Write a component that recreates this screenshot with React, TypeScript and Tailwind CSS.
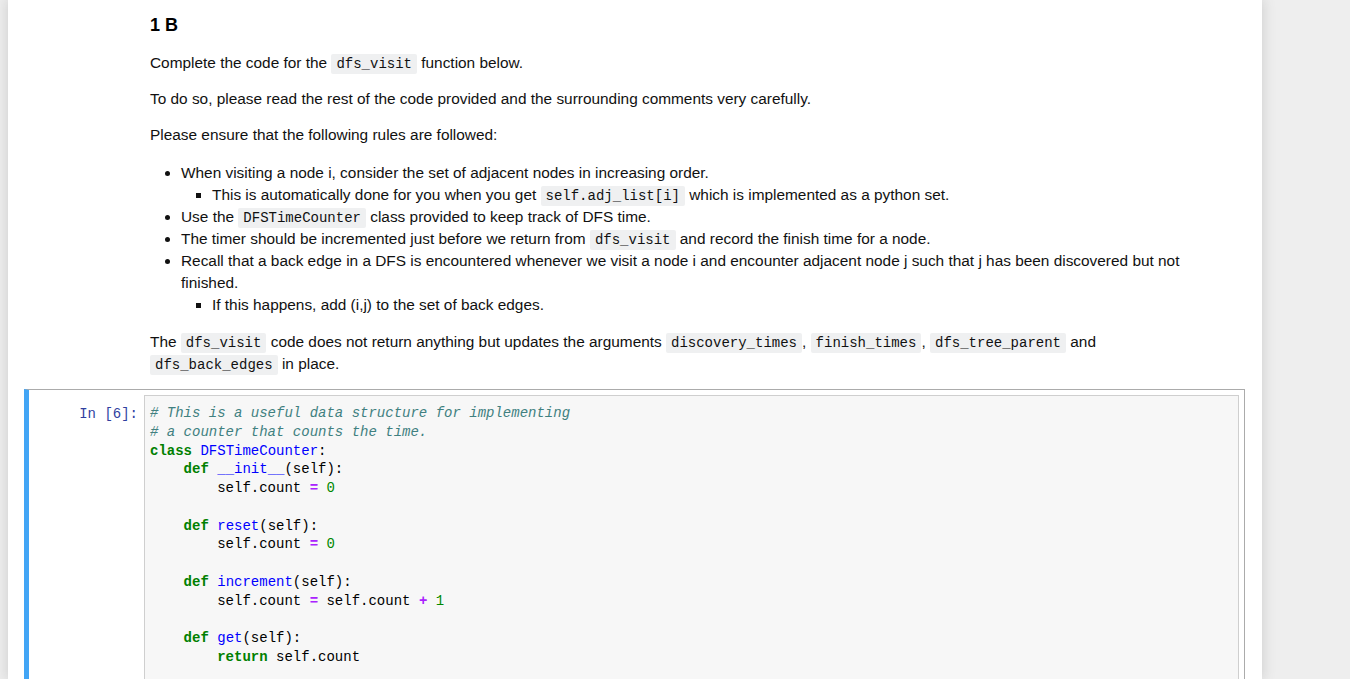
const sans = { fontFamily: '"Liberation Sans", Arial, sans-serif' };

const Code = ({ children }: { children: React.ReactNode }) => (
    <code className="font-['Liberation_Mono',monospace] text-[14px] leading-[14px] bg-[#eff0f1] px-[5px] py-[2px] rounded-[2px]">{children}</code>
);

const K = ({ children }: { children: React.ReactNode }) => <span className="text-[#008000] font-bold">{children}</span>;
const D = ({ children }: { children: React.ReactNode }) => <span className="text-[#0000ff]">{children}</span>;
const O = ({ children }: { children: React.ReactNode }) => <span className="text-[#aa22ff] font-bold">{children}</span>;
const N = ({ children }: { children: React.ReactNode }) => <span className="text-[#008800]">{children}</span>;
const C = ({ children }: { children: React.ReactNode }) => <span className="text-[#408080] italic">{children}</span>;

const Markdown = () => (
    <div className="pl-[142px] w-[1217px] text-[15.4px] leading-[22px] text-[#111]" style={sans}>
        <h3 className="pt-[14px] text-[18px] leading-[22px] font-bold text-black">1 B</h3>
        <p className="mt-[16px]">Complete the code for the <Code>dfs_visit</Code> function below.</p>
        <p className="mt-[14px]">To do so, please read the rest of the code provided and the surrounding comments very carefully.</p>
        <p className="mt-[14px]">Please ensure that the following rules are followed:</p>
        <ul className="mt-[16px] pl-[31px] list-disc">
            <li>
                When visiting a node i, consider the set of adjacent nodes in increasing order.
                <ul className="pl-[31px] list-[square]">
                    <li>This is automatically done for you when you get <Code>self.adj_list[i]</Code> which is implemented as a python set.</li>
                </ul>
            </li>
            <li>Use the <Code>DFSTimeCounter</Code> class provided to keep track of DFS time.</li>
            <li>The timer should be incremented just before we return from <Code>dfs_visit</Code> and record the finish time for a node.</li>
            <li>
                Recall that a back edge in a DFS is encountered whenever we visit a node i and encounter adjacent node j such that j has been discovered but not finished.
                <ul className="pl-[31px] list-[square]">
                    <li>If this happens, add (i,j) to the set of back edges.</li>
                </ul>
            </li>
        </ul>
        <p className="mt-[15px]">
            The <Code>dfs_visit</Code> code does not return anything but updates the arguments <Code>discovery_times</Code>, <Code>finish_times</Code>, <Code>dfs_tree_parent</Code> and <Code>dfs_back_edges</Code> in place.
        </p>
    </div>
);

const CodeCell = () => (
    <div className="mt-[14px] ml-[16px] mr-[17px] flex border border-[#ababab] border-l-[5px] border-l-[#42a5f5] p-[5px] pb-0 font-['Liberation_Mono',monospace] text-[14px] leading-[18.75px]">
        <div className="w-[110px] shrink-0 text-right pr-[6px] pt-[10px] text-[#303f9f]">In [6]:</div>
        <div className="flex-1 bg-[#f7f7f7] border border-[#cfcfcf] border-b-0 pl-[5px] pt-[8px] pb-[60px] whitespace-pre text-black">
            <div><C># This is a useful data structure for implementing</C></div>
            <div><C># a counter that counts the time.</C></div>
            <div><K>class</K> <D>DFSTimeCounter</D>:</div>
            <div>    <K>def</K> <D>__init__</D>(self):</div>
            <div>        self.count <O>=</O> <N>0</N></div>
            <div> </div>
            <div>    <K>def</K> <D>reset</D>(self):</div>
            <div>        self.count <O>=</O> <N>0</N></div>
            <div> </div>
            <div>    <K>def</K> <D>increment</D>(self):</div>
            <div>        self.count <O>=</O> self.count <O>+</O> <N>1</N></div>
            <div> </div>
            <div>    <K>def</K> <D>get</D>(self):</div>
            <div>        <K>return</K> self.count</div>
        </div>
    </div>
);

export default function App() {
    return (
        <div className="h-[679px] overflow-hidden bg-[#eeeeee]">
            <div className="ml-[8px] w-[1254px] h-full bg-white shadow-[0_0_12px_1px_rgba(87,87,87,0.2)]">
                <Markdown />
                <CodeCell />
            </div>
        </div>
    );
}
